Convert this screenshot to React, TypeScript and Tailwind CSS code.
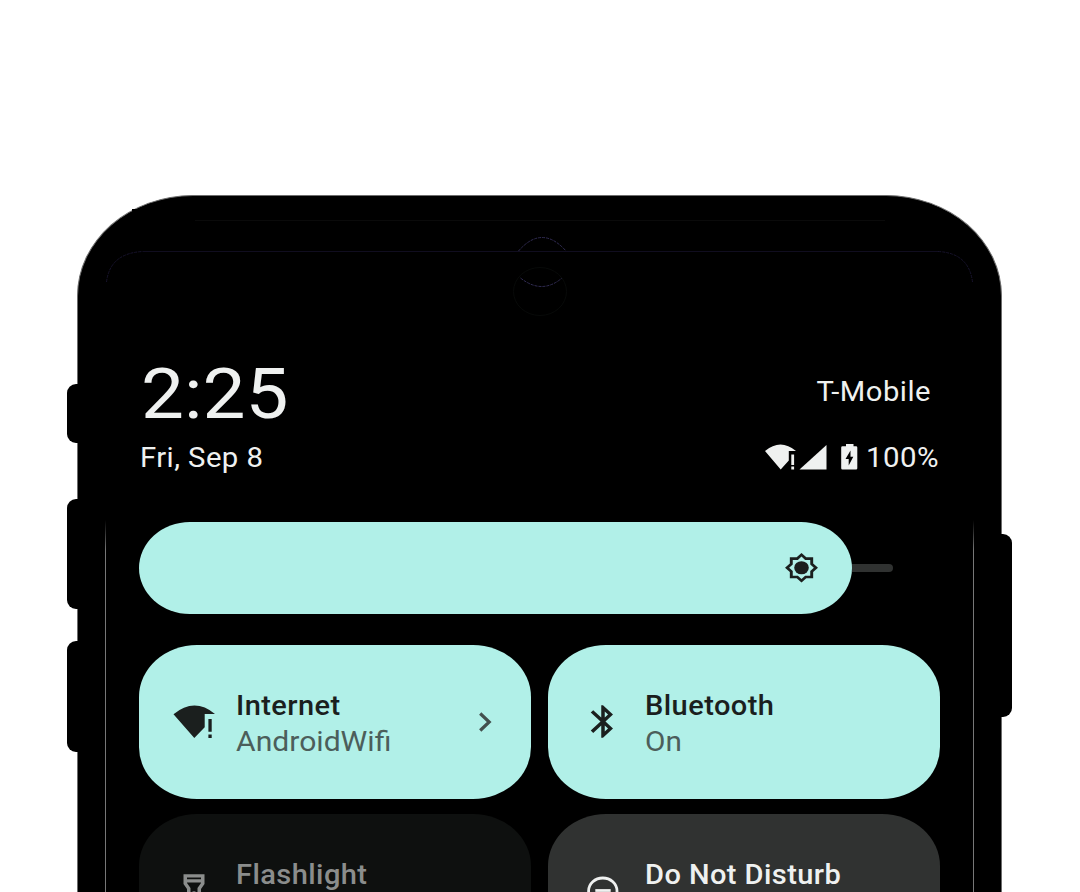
import type { ReactNode } from "react";

function Tile({ tone, icon, title, subtitle, trailing }: {
  tone: string; icon: ReactNode; title: ReactNode; subtitle?: ReactNode; trailing?: ReactNode;
}) {
  return (
    <div className={`flex h-[154px] items-start rounded-[58px/52px] pl-[34px] ${tone}`}>
      <div className="mt-[57px] h-[39px] w-[63.4px] shrink-0">{icon}</div>
      <div className="mt-[43px] flex-1 whitespace-nowrap text-[27px] leading-[36px]">
        <div className="w-max origin-left scale-x-[1.075] font-medium tracking-[0.4px]">{title}</div>
        {subtitle}
      </div>
      {trailing}
    </div>
  );
}

const iconBox = { width: 42, height: 39, viewBox: "0 0 24 24", preserveAspectRatio: "none", fill: "currentColor" };

export default function App() {
  return (
    <div className="relative flex h-[892px] w-[1080px] overflow-hidden bg-white pl-[67px] pt-[195px] font-['Roboto',sans-serif]">
      <div className="z-10 -mr-[2px] flex w-[12px] shrink-0 flex-col pt-[189px]">
        <div className="h-[59px] rounded-l-[9px] bg-black" />
        <div className="mt-[56px] h-[110px] rounded-l-[9px] bg-black" />
        <div className="mt-[32px] h-[111px] rounded-l-[9px] bg-black" />
      </div>

      <div className="h-[900px] w-[925px] shrink-0 rounded-t-[116px_101px] border border-b-0 border-[#6d6d6d] bg-black pl-[61px] text-[#eff1f0]">
        <div className="flex h-[325.5px] w-[801px] justify-between">
          <div className="pt-[162px] whitespace-nowrap">
            <div className="ml-[2px] w-max origin-left scale-x-[1.085] text-[70.5px] leading-[72px]">2:25</div>
            <div className="mt-[10px] ml-[1px] w-max origin-left scale-x-[1.085] text-[27px] leading-[36px] tracking-[0.4px]">Fri, Sep 8</div>
          </div>
          <div className="flex flex-col items-end pt-[178px] whitespace-nowrap">
            <div className="mr-[8.5px] w-max origin-right scale-x-[1.08] text-[27px] leading-[36px] tracking-[0.5px]">T-Mobile</div>
            <div className="mt-[30px] flex h-[36px] items-start">
              <svg className="mt-[3px]" width="94" height="28" viewBox="764 442 94 28" fill="currentColor">
                <path d="M765 450 Q780.5 437 796 450 H788.8 V459.5 L780.7 468.5Z" />
                <path d="M791.3 453.5h2.8v10.5h-2.8zM791.3 465.5h2.8v3h-2.8z" />
                <path d="M799.5 468.5 L826.5 444 V468.5Z" />
                <path d="M842.5 445.3h3.5V443h7.5v2.3h2.5a1.3 1.3 0 0 1 1.3 1.3v20.6a1.3 1.3 0 0 1-1.3 1.3h-13.5a1.3 1.3 0 0 1-1.3-1.3v-20.6a1.3 1.3 0 0 1 1.3-1.3z" />
                <path d="M850.5 449.5 L845.5 458 H848.7 V464.5 L853.3 455.7 H850.5Z" fill="#000" />
              </svg>
              <div className="ml-[8.5px] w-[74px]"><div className="w-max origin-left scale-x-[1.09] text-[27px] leading-[36px] tracking-[0.4px]">100%</div></div>
            </div>
          </div>
        </div>

        <div className="flex h-[93px] items-center">
          <div className="flex h-[92.5px] w-[713px] items-center justify-end rounded-[52px/47px] bg-[#b1f0e8] pr-[33px] text-[#1b1f1e]">
            <svg width="35" height="31.5" viewBox="0 0 24 24" preserveAspectRatio="none" fill="currentColor">
              <path d="M20 8.69V4h-4.69L12 .69 8.69 4H4v4.69L.69 12 4 15.31V20h4.69L12 23.31 15.31 20H20v-4.69L23.31 12 20 8.69zm-2 5.79V18h-3.52L12 20.48 9.52 18H6v-3.52L3.52 12 6 9.52V6h3.52L12 3.52 14.48 6H18v3.52L20.48 12 18 14.48z" />
              <circle cx="12" cy="12" r="5" />
            </svg>
          </div>
          <div className="h-[8px] w-[41px] rounded-r-full bg-[#303231]" />
        </div>

        <div className="mt-[30.5px] grid w-[801px] grid-cols-2 gap-x-[17px] gap-y-[15px]">
          <Tile
            tone="bg-[#b1f0e8] text-[#1b1f1e]"
            icon={
              <svg width="44" height="39" viewBox="173 702 44 39" fill="currentColor">
                <path d="M173.5 714.3 Q194.3 697 215 714 H204.7 V727.3 L194.3 738Z" />
                <path d="M208.4 719h3.3v12.7h-3.3zM208.4 734.5h3.3v3.5h-3.3z" />
              </svg>
            }
            title="Internet"
            subtitle={<div className="w-max origin-left scale-x-[1.115] text-[#4c5e5b]">AndroidWifi</div>}
            trailing={
              <svg className="mt-[65px] mr-[37px] text-[#43504e]" width="16" height="24" viewBox="0 0 16 24" fill="none" stroke="currentColor" strokeWidth="3.2">
                <path d="M2.2 3.5 L11.2 12 L2.2 20.5" />
              </svg>
            }
          />
          <Tile
            tone="bg-[#b1f0e8] text-[#1b1f1e]"
            icon={
              <svg {...iconBox}>
                <path d="M17.71 7.71L12 2h-1v7.59L6.41 5 5 6.41 10.59 12 5 17.59 6.41 19 11 14.41V22h1l5.71-5.71-4.3-4.29 4.3-4.29zM13 5.83l1.88 1.88L13 9.59V5.83zm1.88 10.46L13 18.17v-3.76l1.88 1.88z" />
              </svg>
            }
            title="Bluetooth"
            subtitle={<div className="w-max origin-left scale-x-[1.1] text-[#4c5e5b]">On</div>}
          />
          <Tile
            tone="bg-[#0e100f] text-[#8b8d8c]"
            icon={
              <svg {...iconBox}>
                <path d="M6 2v6l2 3v11h8V11l2-3V2H6zm10 2v1H8V4h8zm-2 6.4V20h-4v-9.61l-2-3V7h8v.39l-2 3.01z" />
                <circle cx="12" cy="14" r="1.5" />
              </svg>
            }
            title="Flashlight"
          />
          <Tile
            tone="bg-[#303231] text-[#eff1f0]"
            icon={
              <svg width="42" height="39" viewBox="582 872 42 39" fill="none" stroke="currentColor" strokeWidth="2.8">
                <ellipse cx="602.8" cy="892" rx="14.2" ry="13" />
                <path d="M595.3 891.5h15.4" />
              </svg>
            }
            title="Do Not Disturb"
          />
        </div>
      </div>

      <div className="z-10 -ml-[2px] flex w-[12px] shrink-0 flex-col pt-[339px]">
        <div className="h-[183px] rounded-r-[9px] bg-black" />
      </div>

      <svg className="pointer-events-none absolute left-0 top-0" width="1080" height="892" fill="none">
        <defs>
          <linearGradient id="edge" gradientUnits="userSpaceOnUse" x1="0" y1="520" x2="0" y2="550">
            <stop offset="0" stopColor="#777" stopOpacity="0" />
            <stop offset="1" stopColor="#777" />
          </linearGradient>
        </defs>
        <path d="M132 209h7v2h-7z" fill="#000" />
        <path d="M195 220.5H885" stroke="#0a0a0a" />
        <path d="M143 251.5 H938" stroke="#100d1f" />
        <path d="M106.5 282 Q110 253 143 251.5 M938 251.5 Q969 253 972.5 282" stroke="#17132c" strokeDasharray="3 1" />
        <path d="M518.5 251 Q542 224 566 251M520.5 278 Q542 295 562 278" stroke="#302b52" strokeDasharray="3 1" />
        <ellipse cx="540" cy="291.5" rx="26.5" ry="24" stroke="#080a09" />
        <path d="M105 520h1V892h-1zM973 520h1V892h-1z" fill="url(#edge)" />
      </svg>
    </div>
  );
}
